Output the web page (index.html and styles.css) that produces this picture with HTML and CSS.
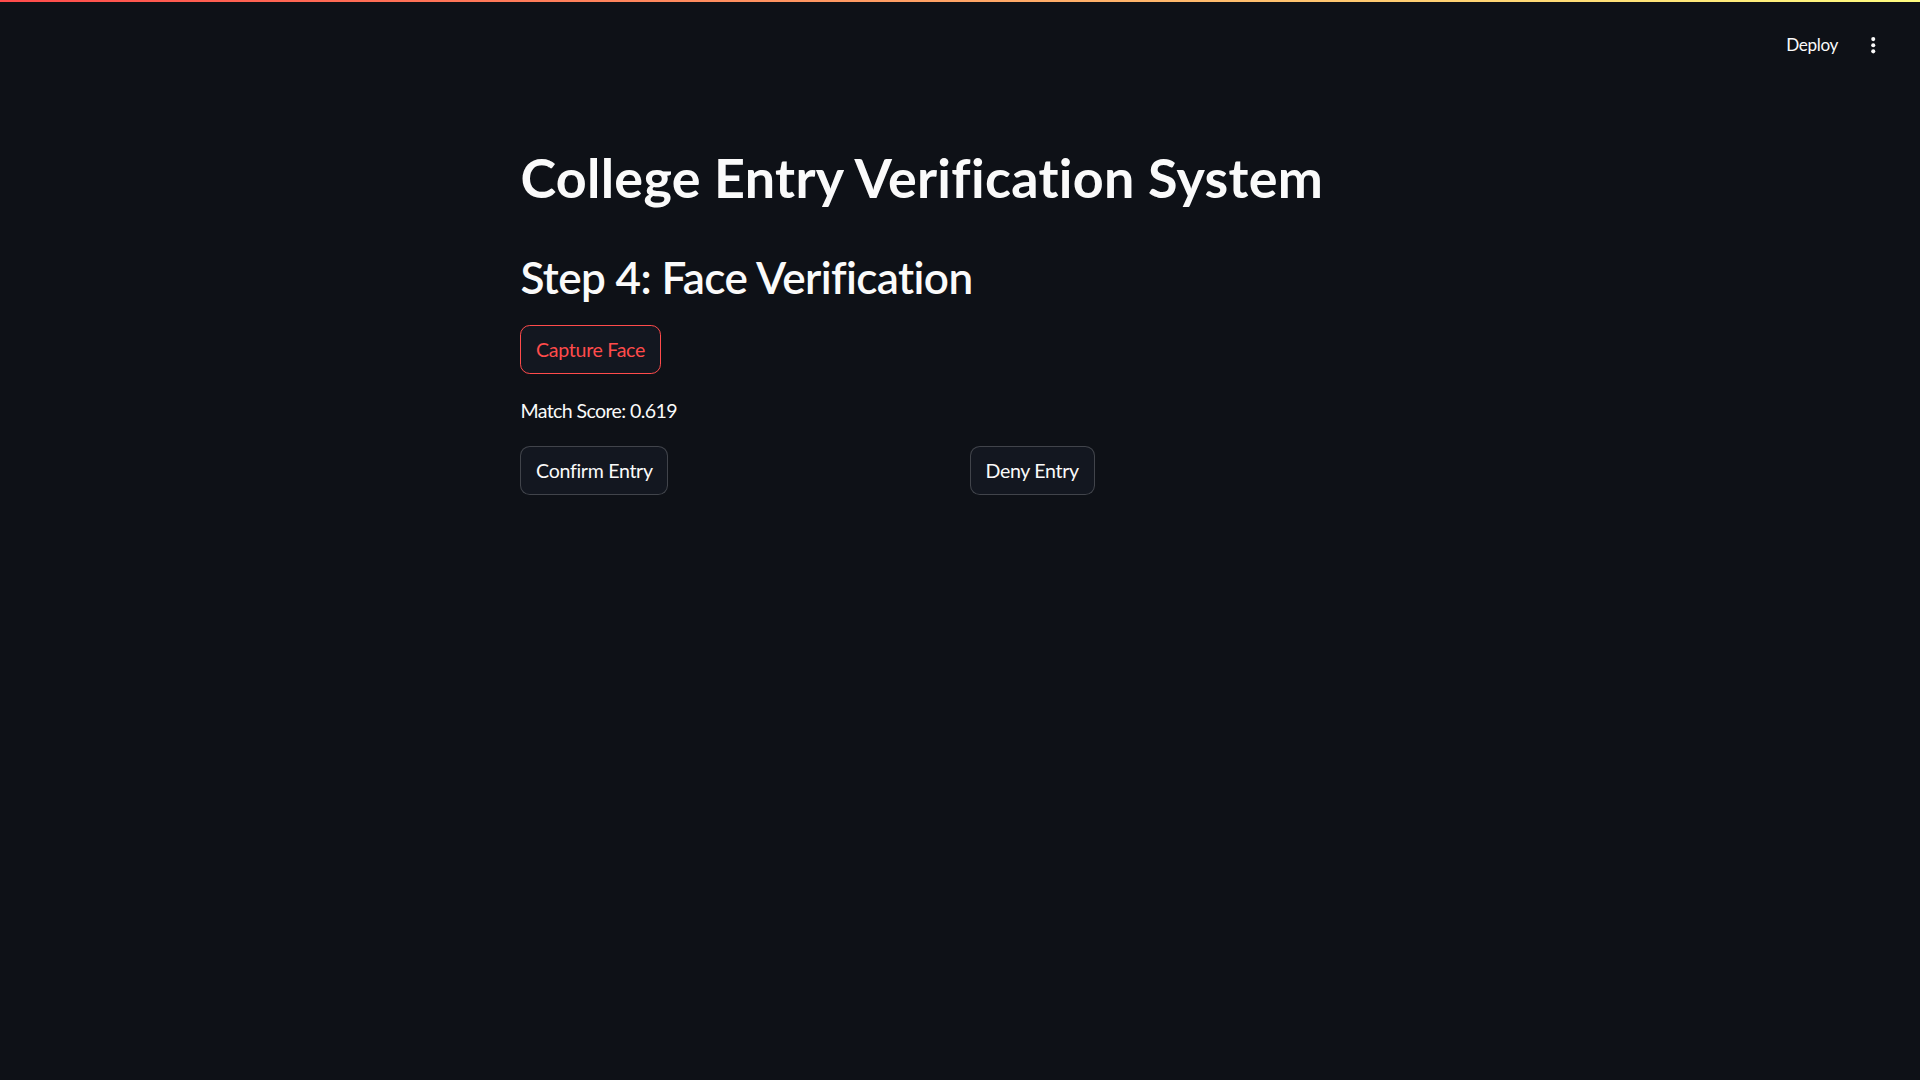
FILE: index.html
```html
<!DOCTYPE html>
<html lang="en" class="scaled">
<head>
<meta charset="utf-8">
<title>College Entry Verification System</title>
<link rel="stylesheet" href="styles.css">
</head>
<body class="app">
  <div class="decoration"></div>
  <header class="header">
    <div class="toolbar">
      <button class="deploy">Deploy</button>
      <button class="menu" aria-label="Main menu">
        <svg viewBox="0 0 24 24" width="20" height="20" aria-hidden="true">
          <circle cx="12" cy="6" r="2" fill="#fafafa"/>
          <circle cx="12" cy="12" r="2" fill="#fafafa"/>
          <circle cx="12" cy="18" r="2" fill="#fafafa"/>
        </svg>
      </button>
    </div>
  </header>
  <main class="main">
    <div class="block">
      <h1 class="title">College Entry Verification System</h1>
      <h2 class="subtitle">Step 4: Face Verification</h2>
      <div class="row">
        <button class="btn btn-focus">Capture Face</button>
      </div>
      <p class="text">Match Score: 0.619</p>
      <div class="columns">
        <div class="col"><button class="btn">Confirm Entry</button></div>
        <div class="col"><button class="btn">Deny Entry</button></div>
      </div>
    </div>
  </main>
</body>
</html>
```

FILE: styles.css
```css
.scaled {
  zoom: 1.2245;
  background: #0e1117;
}

.app {
  margin: 0;
  background: #0e1117;
  color: #fafafa;
  font-family: "Lato", "Noto Sans", sans-serif;
}

.decoration {
  height: 2px;
  background: linear-gradient(90deg, #ff4b4b, #fffd80);
}

.header {
  box-sizing: border-box;
  height: 58px;
  padding: 12px 28px 0 0;
  display: flex;
  justify-content: flex-end;
  align-items: center;
}

.toolbar {
  display: flex;
  align-items: center;
  gap: 19px;
}

.deploy {
  background: transparent;
  border: none;
  padding: 0;
  margin: 0;
  color: #fafafa;
  font-family: inherit;
  font-size: 14px;
  line-height: 20px;
  letter-spacing: -0.3px;
}

.menu {
  background: transparent;
  border: none;
  padding: 0;
  margin: 0;
  width: 20px;
  height: 20px;
  display: flex;
  align-items: center;
  justify-content: center;
}

.menu svg {
  display: block;
}

.main {
  padding: 58.6px 0 160px;
}

.block {
  width: 718px;
  margin: 0 auto;
  display: flex;
  flex-direction: column;
  gap: 16px;
}

.title {
  margin: 0 0 18px;
  font-size: 44px;
  line-height: 52.8px;
  font-weight: 700;
  letter-spacing: 0.24px;
}

.subtitle {
  margin: 0 0 1px;
  font-size: 36px;
  line-height: 43.2px;
  font-weight: 600;
  letter-spacing: -0.5px;
}

.row {
  display: flex;
}

.text {
  margin: 1px 0 0.5px;
  font-size: 16px;
  line-height: 25.6px;
  letter-spacing: -0.5px;
}

.columns {
  display: flex;
  gap: 16px;
}

.col {
  flex: 1 1 0;
  display: flex;
}

.btn {
  box-sizing: border-box;
  min-height: 40px;
  padding: 4px 12px;
  border: 1px solid rgba(250, 250, 250, 0.2);
  border-radius: 8px;
  background: rgb(19, 23, 32);
  color: #fafafa;
  font-family: inherit;
  font-size: 16px;
  line-height: 25.6px;
  font-weight: 400;
  letter-spacing: -0.25px;
}

.btn-focus {
  border-color: #ff4b4b;
  color: #ff4b4b;
}
```
